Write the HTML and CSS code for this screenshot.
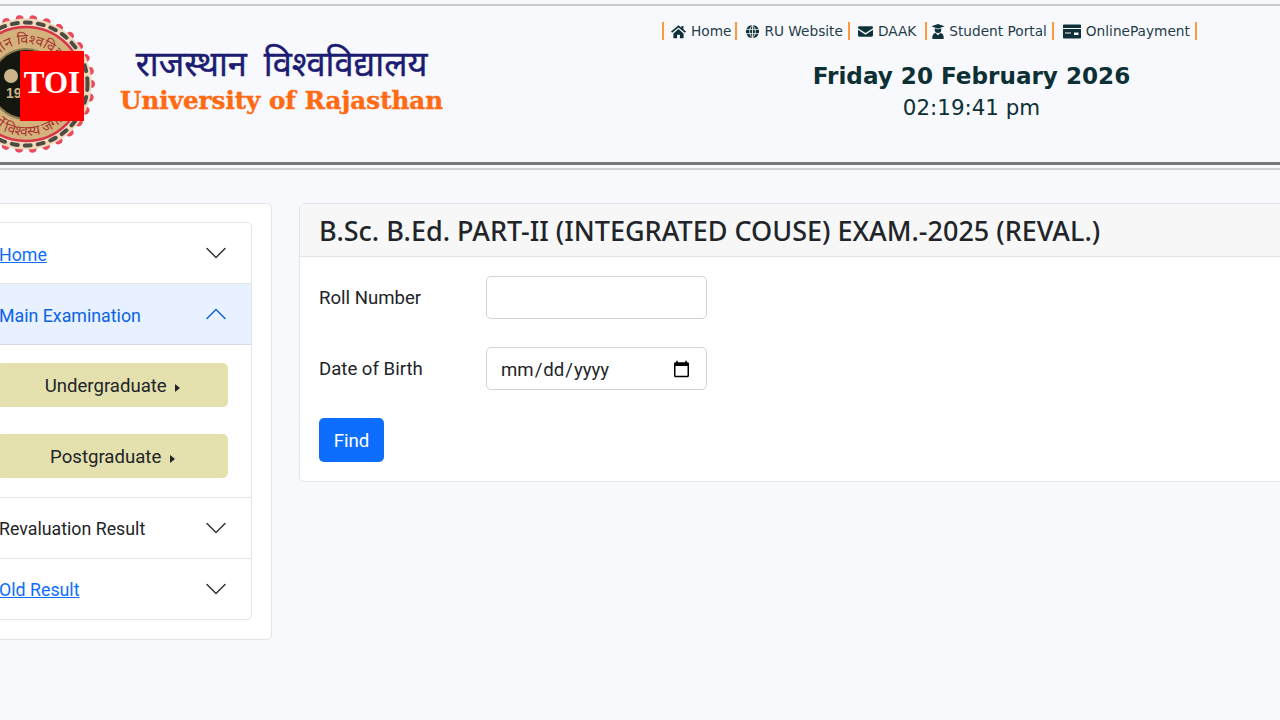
FILE: index.html
```html
<!DOCTYPE html>
<html lang="en">
<head>
  <meta charset="UTF-8">
  <title>University of Rajasthan</title>
  <link rel="stylesheet" href="styles.css">
</head>
<body>
  <header class="site-header">
    <div class="brand">
      <div class="seal">
        <svg width="140" height="140" viewBox="0 0 140 140">
          <defs>
            <path id="seal-top" d="M70 110a40 40 0 1 1 0-80 40 40 0 1 1 0 80"/>
            <path id="seal-bottom" d="M18 70a52 52 0 0 0 104 0"/>
          </defs>
          <circle cx="70" cy="70" r="65" fill="none" stroke="#ea4a5c" stroke-width="8" stroke-linecap="round" stroke-dasharray="0.01 13.6"/>
          <circle cx="70" cy="70" r="65.5" fill="#f0d8bd"/>
          <circle cx="70" cy="70" r="61.5" fill="none" stroke="#4d4c42" stroke-width="4" stroke-linecap="round" stroke-dasharray="6 7.100"/>
          <circle cx="70" cy="70" r="57" fill="#d3b27c" stroke="#d8354a" stroke-width="2.500"/>
          <circle cx="70" cy="70" r="35" fill="#14170f" stroke="#8a7a50" stroke-width="2"/>
          <circle cx="55" cy="62" r="7" fill="#cdb58a"/>
          <text class="seal-year" x="50" y="84">19</text>
          <text class="seal-words" text-anchor="middle"><textPath href="#seal-top" startOffset="50%">राजस्थान विश्वविद्यालय</textPath></text>
          <text class="seal-words" text-anchor="middle"><textPath href="#seal-bottom" startOffset="50%">धर्मो विश्वस्य जगतः</textPath></text>
        </svg>
        <div class="toi-badge">TOI</div>
      </div>
      <div class="brand-name">
        <div class="brand-hindi">राजस्थान विश्वविद्यालय</div>
        <div class="brand-english">University of Rajasthan</div>
      </div>
    </div>
    <div class="header-right">
      <nav class="top-nav">
        <a href="#" class="nav-first">
          <svg class="nav-icon nav-icon-home" viewBox="0 0 16 16"><path d="M8 1.200 0 8.100l1.200 1.300L8 3.600l6.800 5.800L16 8.100l-2.800-2.400V2.200h-2.100v1.700L8 1.200zM2.600 10v5.200h3.900v-3.700h3v3.700h3.900V10L8 5.400 2.600 10z"/></svg>
          Home</a>
        <a href="#">
          <svg class="nav-icon" viewBox="0 0 16 16"><circle cx="8" cy="8" r="7"/><path d="M1 5.700h14M1 10.300h14M8 1v14M8 1C4 5 4 11 8 15M8 1c4 4 4 10 0 14" fill="none" stroke="#f8f9fc" stroke-width=".9"/></svg>
          RU Website</a>
        <a href="#" class="nav-daak">
          <svg class="nav-icon" viewBox="0 0 16 16"><path d="M1.500 2.500h13A1.500 1.500 0 0 1 16 4v.4L8 9.600 0 4.400V4a1.500 1.500 0 0 1 1.500-1.500zM0 6.200V12a1.500 1.500 0 0 0 1.500 1.500h13A1.500 1.500 0 0 0 16 12V6.200l-8 5.200-8-5.200z"/></svg>
          DAAK</a>
        <a href="#" class="nav-tight">
          <svg class="nav-icon nav-icon-narrow" viewBox="0 0 14 16"><path d="M7 0l7 2.500L7 5 0 2.500 7 0zM3.500 4.600 7 5.900l3.500-1.300V6a3.500 3.500 0 0 1-7 0V4.600zM1 16v-2.500C1 11 3 9.500 4.500 9.500L7 12l2.500-2.500c1.500 0 3.500 1.500 3.500 4V16H1z"/></svg>
          Student Portal</a>
        <a href="#" class="nav-wide">
          <svg class="nav-icon nav-icon-card" viewBox="0 0 18 14"><path fill-rule="evenodd" d="M1 0h16a1 1 0 0 1 1 1v12a1 1 0 0 1-1 1H1a1 1 0 0 1-1-1V1a1 1 0 0 1 1-1zM0 3.600v1h18v-1H0zM2 8v1h6V8H2zm9 0v2.500h4.500V8H11z"/></svg>
          OnlinePayment</a>
      </nav>
      <div class="clock">
        <div class="clock-date">Friday 20 February 2026</div>
        <div class="clock-time">02:19:41 pm</div>
      </div>
    </div>
  </header>
  <hr class="header-rule">

  <main class="page">
    <aside class="side-card">
      <div class="accordion">
        <div class="acc-row">
          <a href="#" class="acc-link">Home</a>
          <svg class="chevron" viewBox="0 0 16 16"><path d="M1.646 4.646a.5.5 0 0 1 .708 0L8 10.293l5.646-5.647a.5.5 0 0 1 .708.708l-6 6a.5.5 0 0 1-.708 0l-6-6a.5.5 0 0 1 0-.708z"/></svg>
        </div>
        <div class="acc-row acc-open">
          <span>Main Examination</span>
          <svg class="chevron chevron-up" viewBox="0 0 16 16"><path d="M1.646 4.646a.5.5 0 0 1 .708 0L8 10.293l5.646-5.647a.5.5 0 0 1 .708.708l-6 6a.5.5 0 0 1-.708 0l-6-6a.5.5 0 0 1 0-.708z"/></svg>
        </div>
        <div class="acc-body">
          <button class="level-btn">Undergraduate <span class="caret"></span></button>
          <button class="level-btn">Postgraduate <span class="caret"></span></button>
        </div>
        <div class="acc-row">
          <span>Revaluation Result</span>
          <svg class="chevron" viewBox="0 0 16 16"><path d="M1.646 4.646a.5.5 0 0 1 .708 0L8 10.293l5.646-5.647a.5.5 0 0 1 .708.708l-6 6a.5.5 0 0 1-.708 0l-6-6a.5.5 0 0 1 0-.708z"/></svg>
        </div>
        <div class="acc-row">
          <a href="#" class="acc-link">Old Result</a>
          <svg class="chevron" viewBox="0 0 16 16"><path d="M1.646 4.646a.5.5 0 0 1 .708 0L8 10.293l5.646-5.647a.5.5 0 0 1 .708.708l-6 6a.5.5 0 0 1-.708 0l-6-6a.5.5 0 0 1 0-.708z"/></svg>
        </div>
      </div>
    </aside>

    <section class="form-card">
      <h1 class="form-title">B.Sc. B.Ed. PART-II (INTEGRATED COUSE) EXAM.-2025 (REVAL.)</h1>
      <form class="form-body">
        <div class="form-row">
          <label for="roll">Roll Number</label>
          <input type="text" id="roll" class="form-input">
        </div>
        <div class="form-row">
          <label for="dob">Date of Birth</label>
          <input type="date" id="dob" class="form-input">
        </div>
        <button type="button" class="find-btn">Find</button>
      </form>
    </section>
  </main>
</body>
</html>
```
FILE: styles.css
```css
* {
  box-sizing: border-box;
}
body {
  margin: 0;
  height: 720px;
  overflow: hidden;
  background: #f8f9fc;
  color: #212529;
  font-family: Roboto, "Noto Sans", sans-serif;
  font-size: 18.6px;
}
.site-header {
  display: flex;
  height: 161px;
  margin-top: 4px;
  border-top: 2px solid #c9cacd;
  border-bottom: 3px solid #77797b;
}
.brand {
  display: flex;
  width: 706px;
  margin-left: -44px;
  flex: none;
}
.seal {
  position: relative;
  width: 140px;
  height: 140px;
  margin-top: 8px;
  flex: none;
}
.seal-year {
  fill: #cdb58a;
  font-family: "Liberation Sans", sans-serif;
  font-size: 14px;
  font-weight: bold;
}
.seal-words {
  fill: #a8332f;
  font-family: "Noto Sans", "DejaVu Sans", sans-serif;
  font-size: 14px;
}
.toi-badge {
  position: absolute;
  left: 64px;
  top: 37px;
  width: 64px;
  height: 70px;
  background: #f00;
  color: #fff;
  font-family: "Liberation Serif", serif;
  font-size: 31px;
  font-weight: bold;
  line-height: 64px;
  text-align: center;
}
.brand-name {
  margin: 34px 0 0 24px;
  text-align: center;
}
.brand-hindi {
  color: #1c1c72;
  font-family: "Noto Sans", "DejaVu Sans", sans-serif;
  font-size: 34.4px;
  line-height: 46px;
  word-spacing: 8px;
  -webkit-text-stroke: .4px #1c1c72;
}
.brand-english {
  color: #ff6a13;
  font-family: "DejaVu Serif", serif;
  font-size: 24.6px;
  font-weight: bold;
  line-height: 30px;
  white-space: nowrap;
  -webkit-text-stroke: .4px #ff6a13;
}
.header-right {
  width: 534px;
  padding-top: 16px;
}
.top-nav {
  display: flex;
  height: 18px;
  border-left: 2px solid #ff9a3c;
  color: #1f3d48;
  font-family: "DejaVu Sans", sans-serif;
  font-size: 13.7px;
}
.top-nav a {
  display: flex;
  align-items: center;
  gap: 4px;
  padding: 0 5px 0 8px;
  border-right: 2px solid #ff9a3c;
  color: inherit;
  text-decoration: none;
  white-space: nowrap;
}
.top-nav a.nav-first {
  padding: 0 4px 0 6px;
}
.top-nav a.nav-daak {
  gap: 5px;
  padding-right: 9px;
}
.top-nav a.nav-tight {
  padding-left: 4px;
}
.top-nav a.nav-wide {
  gap: 5px;
  padding-left: 9px;
}
.nav-icon {
  width: 15px;
  height: 15px;
  fill: #0e3038;
}
.nav-icon-home {
  width: 17px;
}
.nav-icon-narrow {
  width: 14px;
}
.nav-icon-card {
  width: 18px;
}
.clock {
  margin-top: 21px;
  padding-left: 85px;
  color: #0d3035;
  font-family: "DejaVu Sans", sans-serif;
  text-align: center;
}
.clock-date {
  font-size: 23.1px;
  font-weight: bold;
  line-height: 31px;
}
.clock-time {
  font-size: 21.4px;
  line-height: 32px;
}
.header-rule {
  height: 2px;
  margin: 3px 0 0;
  border: 0;
  background: #cfd0d2;
}
.page {
  display: flex;
  gap: 27px;
  align-items: flex-start;
  margin-left: -48px;
  padding-top: 33px;
}
.side-card {
  width: 320px;
  flex: none;
  padding: 18px 19px 19px;
  background: #fff;
  border: 1px solid #e3e4e6;
  border-radius: 5px;
}
.accordion {
  background: #fff;
  border: 1px solid #e3e4e6;
  border-radius: 5px;
}
.acc-row {
  display: flex;
  align-items: center;
  justify-content: space-between;
  height: 61px;
  padding: 0 23px 0 26px;
  border-bottom: 1px solid #e3e4e6;
  font-size: 17.8px;
}
.acc-row > :first-child {
  margin-top: 2px;
}
.acc-body ~ .acc-row > :first-child {
  margin-top: 0;
}
.acc-row:last-child {
  height: 60px;
  border-bottom: 0;
}
.acc-open {
  background: #e7f1ff;
  border-bottom-color: #d5dce8;
  color: #0c63e4;
}
.acc-link {
  color: #0d6efd;
}
.chevron {
  width: 24px;
  height: 24px;
  fill: #333;
}
.chevron-up {
  fill: #0c63e4;
  transform: rotate(180deg);
}
.acc-body {
  display: flex;
  flex-direction: column;
  gap: 27px;
  padding: 18px 23px 19px 24px;
  border-bottom: 1px solid #e3e4e6;
}
.level-btn {
  height: 44px;
  padding: 2px 0 0;
  background: #e5e1ae;
  border: 0;
  border-radius: 5px;
  color: #212529;
  font: inherit;
}
.caret {
  display: inline-block;
  margin-left: 4px;
  border-left: 5px solid #212529;
  border-top: 4.5px solid transparent;
  border-bottom: 4.5px solid transparent;
  vertical-align: 0;
}
.form-card {
  width: 1100px;
  flex: none;
  background: #fff;
  border: 1px solid #e3e4e6;
  border-radius: 5px;
}
.form-title {
  height: 53px;
  margin: 0;
  padding: 0 19px;
  background: #f7f7f7;
  border-bottom: 1px solid #e3e4e6;
  font-family: "Noto Sans", sans-serif;
  font-size: 27px;
  font-weight: 500;
  line-height: 53px;
  white-space: nowrap;
}
.form-body {
  padding: 19px 20px 19px 19px;
}
.form-row {
  display: flex;
  align-items: center;
  margin-bottom: 28px;
}
.form-row label {
  width: 167px;
  flex: none;
  padding: 1px 0 0;
}
.form-input {
  width: 221px;
  height: 43px;
  padding: 2px 13px 0;
  background: #fff;
  border: 1px solid #ced4da;
  border-radius: 5px;
  color: #212529;
  font: inherit;
}
.find-btn {
  display: block;
  width: 65px;
  height: 44px;
  padding: 2px 0 0;
  background: #0d6efd;
  border: 0;
  border-radius: 5px;
  color: #fff;
  font: inherit;
}
```
